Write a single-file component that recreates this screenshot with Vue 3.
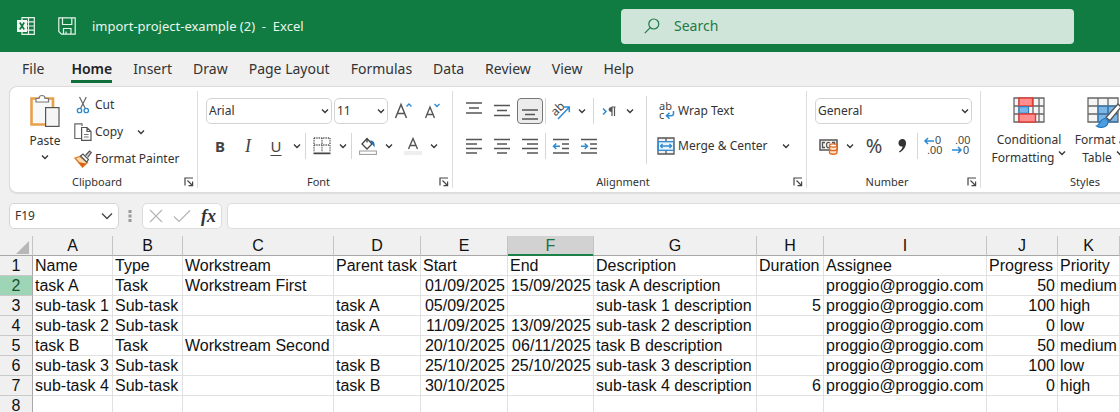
<script setup>
import { ref, h } from 'vue'

const Chevron = () =>
  h('svg', { class: 'chev', viewBox: '0 0 8 8', width: 8, height: 8, 'aria-hidden': 'true' }, [
    h('path', { d: 'M1 2.5 4 5.5 7 2.5', fill: 'none', stroke: '#333', 'stroke-width': 1.3 }),
  ])

const Launcher = () =>
  h('svg', { viewBox: '0 0 10 10', width: 10, height: 10, 'aria-hidden': 'true' }, [
    h('path', {
      d: 'M1 8.5V1H9M3.5 3.5 8 8M8.6 4.5V8.6H4.5',
      fill: 'none',
      stroke: '#444',
      'stroke-width': 1.2,
    }),
  ])

const lineIcons = {
  'Top align': ['M1 2H17', 'M4 7H14', 'M1 12H17'],
  'Middle align': ['M1 4.500H17', 'M4 9.500H14', 'M1 14.500H17'],
  'Bottom align': ['M1 9H17', 'M4 13.500H14', 'M1 18H17'],
  'Align left': ['M1 2.500H17', 'M1 7H12', 'M1 11.500H17', 'M1 16H12'],
  Center: ['M1 2.500H17', 'M4 7H14', 'M1 11.500H17', 'M4 16H14'],
  'Align right': ['M1 2.500H17', 'M6 7H17', 'M1 11.500H17', 'M6 16H17'],
}
const vertical = ['Top align', 'Middle align', 'Bottom align']
const horizontal = ['Align left', 'Center', 'Align right']

const tabs = ['File', 'Home', 'Insert', 'Draw', 'Page Layout', 'Formulas', 'Data', 'Review', 'View', 'Help']
const activeTab = ref('Home')
const formula = ref('')

const columns = ['A', 'B', 'C', 'D', 'E', 'F', 'G', 'H', 'I', 'J', 'K']
const numeric = { 4: true, 5: true, 7: true, 9: true }
const mail = 'proggio@proggio.com'
const rows = [
  ['Name', 'Type', 'Workstream', 'Parent task', 'Start', 'End', 'Description', 'Duration', 'Assignee', 'Progress', 'Priority'],
  ['task A', 'Task', 'Workstream First', '', '01/09/2025', '15/09/2025', 'task A description', '', mail, '50', 'medium'],
  ['sub-task 1', 'Sub-task', '', 'task A', '05/09/2025', '', 'sub-task 1 description', '5', mail, '100', 'high'],
  ['sub-task 2', 'Sub-task', '', 'task A', '11/09/2025', '13/09/2025', 'sub-task 2 description', '', mail, '0', 'low'],
  ['task B', 'Task', 'Workstream Second', '', '20/10/2025', '06/11/2025', 'task B description', '', mail, '50', 'medium'],
  ['sub-task 3', 'Sub-task', '', 'task B', '25/10/2025', '25/10/2025', 'sub-task 3 description', '', mail, '100', 'low'],
  ['sub-task 4', 'Sub-task', '', 'task B', '30/10/2025', '', 'sub-task 4 description', '6', mail, '0', 'high'],
  ['', '', '', '', '', '', '', '', '', '', ''],
]
</script>

<template>
  <div class="app">
    <header class="titlebar">
      <svg class="logo" viewBox="0 0 18 18" width="18" height="18" aria-hidden="true">
        <path d="M5 .7H17.300V17.300H5zM5 4.800H17.300M5 9H17.300M5 13.200H17.300M11.500 .7V17.300" fill="none" stroke="#e6f3eb" stroke-width="1.200" />
        <rect x="0" y="3" width="10" height="12" fill="#f2f9f5" />
        <path d="M2.800 5.500 7.200 12.500M7.200 5.500 2.800 12.500" stroke="#107c41" stroke-width="1.700" />
      </svg>
      <button class="save" aria-label="Save">
        <svg viewBox="0 0 18 18" width="18" height="18" aria-hidden="true">
          <path d="M.8 .8H17.200V17.200H3.500L.8 14.500zM4.500 .8V7.500H13.800V.8M5.500 17V11.500H13V17M8 14.500V17" fill="none" stroke="#e6f3eb" stroke-width="1.200" />
        </svg>
      </button>
      <span class="doc">import-project-example (2)&nbsp; -&nbsp; Excel</span>
      <label class="search">
        <svg viewBox="0 0 16 16" width="16" height="16" aria-hidden="true">
          <circle cx="9.800" cy="6" r="5" fill="none" stroke="#1f7a47" stroke-width="1.200" />
          <path d="M6.200 9.700 .8 15.200" stroke="#1f7a47" stroke-width="1.200" />
        </svg>
        <input type="text" placeholder="Search" aria-label="Search" />
      </label>
    </header>

    <nav class="tabs">
      <button v-for="t in tabs" :key="t" :class="{ active: t === activeTab }" @click="activeTab = t">{{ t }}</button>
    </nav>

    <div class="ribbon">
      <section class="group clipboard">
        <div class="body">
          <button class="paste">
            <svg viewBox="0 0 30 34" width="30" height="34" aria-hidden="true">
              <path d="M1.500 4.500H23V30.500H1.500z" fill="#f7f8f8" stroke="#e8a04a" stroke-width="2.600" />
              <path d="M6 8V4.500H9C9 .5 15 .5 15 4.500H18.500V8z" fill="#fff" stroke="#777" stroke-width="1.200" />
              <rect x="15" y="13" width="14.500" height="19.500" fill="#fff" />
              <rect x="15.600" y="13.600" width="13.400" height="18.800" fill="#f5f5f5" stroke="#555" stroke-width="1.200" />
            </svg>
            <span>Paste</span>
            <Chevron />
          </button>
          <div class="stack">
            <button>
              <svg viewBox="0 0 18 18" width="18" height="18" aria-hidden="true">
                <path d="M5.500 1 11.300 12.500M12.300 1 6.500 12.500" stroke="#666" stroke-width="1.200" />
                <circle cx="5.500" cy="14.500" r="2.200" fill="none" stroke="#2f8ad0" stroke-width="1.300" />
                <circle cx="12.300" cy="14.500" r="2.200" fill="none" stroke="#2f8ad0" stroke-width="1.300" />
              </svg>
              <span>Cut</span>
            </button>
            <button>
              <svg viewBox="0 0 18 18" width="18" height="18" aria-hidden="true">
                <path d="M7 15.500H.8V.8H8V3" fill="none" stroke="#666" stroke-width="1.200" />
                <path d="M7.600 4.500H13L17 8.500V17.300H7.600zM13 4.500V8.500H17" fill="#fff" stroke="#555" stroke-width="1.200" />
                <path d="M10 11.500H14.600M10 14H14.600" stroke="#777" stroke-width="1.200" />
              </svg>
              <span>Copy</span>
              <Chevron />
            </button>
            <button>
              <svg viewBox="0 0 18 18" width="18" height="18" aria-hidden="true">
                <path d="M1 8 6 6.500 13.500 12.500 8.500 17z" fill="#f9dcae" stroke="#e07b22" stroke-width="1.300" />
                <path d="M4 12 8.500 17 12 13.500z" fill="#dd5f14" />
                <path d="M6.500 6 9 4 14.500 9.500 12.500 12z" fill="#fff" stroke="#555" stroke-width="1.200" />
                <path d="M11.500 5.500 15.500 1 17.300 2.600 13.600 7.500" fill="#ccc" stroke="#555" stroke-width="1.200" />
              </svg>
              <span>Format Painter</span>
            </button>
          </div>
        </div>
        <footer><span>Clipboard</span><button aria-label="Clipboard settings"><Launcher /></button></footer>
      </section>

      <section class="group font">
        <div class="body rows">
          <div class="row">
            <label class="pick family">
              <select aria-label="Font"><option>Arial</option></select>
              <Chevron />
            </label>
            <label class="pick size">
              <select aria-label="Font size"><option>11</option></select>
              <Chevron />
            </label>
            <button class="ib grow" aria-label="Increase font size">
              <svg viewBox="0 0 20 20" width="20" height="20" aria-hidden="true">
                <path d="M1.500 17 7 3.500 12.500 17M3.500 12.500H10.500" fill="none" stroke="#555" stroke-width="1.500" />
                <path d="M12.500 5.500 15 3 17.500 5.500" fill="none" stroke="#2f8ad0" stroke-width="1.400" />
              </svg>
            </button>
            <button class="ib" aria-label="Decrease font size">
              <svg viewBox="0 0 20 20" width="20" height="20" aria-hidden="true">
                <path d="M3.500 17 8 6 12.500 17M5 13.500H11" fill="none" stroke="#555" stroke-width="1.400" />
                <path d="M12.500 3 15 5.500 17.500 3" fill="none" stroke="#2f8ad0" stroke-width="1.400" />
              </svg>
            </button>
          </div>
          <div class="row">
            <button class="ib glyph bold">B</button>
            <button class="ib glyph italic">I</button>
            <button class="ib glyph under">U</button>
            <button class="dd" aria-label="Underline options"><Chevron /></button>
            <i class="rule"></i>
            <button class="ib" aria-label="Borders">
              <svg viewBox="0 0 18 18" width="18" height="18" aria-hidden="true">
                <path d="M1 1H17M1 1V15M17 1V15M9 1V15M1 8H17" fill="none" stroke="#555" stroke-width="1.300" stroke-dasharray="1.300 1" />
                <path d="M.5 16.300H17.500" stroke="#444" stroke-width="1.800" />
              </svg>
            </button>
            <button class="dd" aria-label="Border options"><Chevron /></button>
            <i class="rule"></i>
            <button class="ib" aria-label="Fill color">
              <svg viewBox="0 0 18 18" width="18" height="18" aria-hidden="true">
                <path d="M8 1.500 13 7 8 12 3 7zM8 1.500V5.500" fill="#fff" stroke="#444" stroke-width="1.300" />
                <path d="M11 3.500C15 3.500 16 6 15.500 10.500L12.500 6z" fill="#1f6fb5" />
                <rect x=".6" y="14" width="16.800" height="3.400" fill="#fff" stroke="#999" />
              </svg>
            </button>
            <button class="dd roomy" aria-label="Fill color options"><Chevron /></button>
            <button class="ib" aria-label="Font color">
              <svg viewBox="0 0 18 18" width="18" height="18" aria-hidden="true">
                <path d="M4.500 12 9 1.500 13.500 12M6 8.500H12" fill="none" stroke="#555" stroke-width="1.400" />
                <rect x="0" y="14" width="18" height="4" fill="#eee" />
              </svg>
            </button>
            <button class="dd" aria-label="Font color options"><Chevron /></button>
          </div>
        </div>
        <footer><span>Font</span><button aria-label="Font settings"><Launcher /></button></footer>
      </section>

      <section class="group align">
        <div class="body">
          <div class="rows">
            <div class="row">
              <button v-for="n in vertical" :key="n" class="ib" :class="{ on: n === 'Bottom align' }" :aria-label="n">
                <svg viewBox="0 0 18 20" width="18" height="20" aria-hidden="true">
                  <path v-for="d in lineIcons[n]" :key="d" :d="d" stroke="#555" stroke-width="1.400" />
                </svg>
              </button>
              <i class="rule"></i>
              <button class="ib" aria-label="Orientation">
                <svg viewBox="0 0 20 20" width="20" height="20" aria-hidden="true">
                  <text x="1" y="13" transform="rotate(-45 6 10)" font-size="12" fill="#444">ab</text>
                  <path d="M7 18 18 6.500M13 6H18.300V11.300" fill="none" stroke="#2f8ad0" stroke-width="1.500" />
                </svg>
              </button>
              <button class="dd roomy" aria-label="Orientation options"><Chevron /></button>
              <i class="rule"></i>
              <button class="ib" aria-label="Text direction">
                <svg viewBox="0 0 16 16" width="16" height="16" aria-hidden="true">
                  <path d="M2 5.500 5 8.500 2 11.500" fill="none" stroke="#2f8ad0" stroke-width="1.500" />
                  <path d="M10.500 4H14.500M11 4V13M13.500 4V13" stroke="#555" stroke-width="1.200" />
                  <path d="M11 4C6.500 4 6.500 9 11 9z" fill="#555" />
                </svg>
              </button>
              <button class="dd" aria-label="Text direction options"><Chevron /></button>
            </div>
            <div class="row">
              <button v-for="n in horizontal" :key="n" class="ib" :aria-label="n">
                <svg viewBox="0 0 18 18" width="18" height="18" aria-hidden="true">
                  <path v-for="d in lineIcons[n]" :key="d" :d="d" stroke="#555" stroke-width="1.400" />
                </svg>
              </button>
              <i class="rule"></i>
              <button class="ib" aria-label="Decrease indent">
                <svg viewBox="0 0 18 18" width="18" height="18" aria-hidden="true">
                  <path d="M1 2.500H17M10 7H17M10 11.500H17M1 16H17" stroke="#555" stroke-width="1.400" />
                  <path d="M8 9.200H1.800M4.300 6.500 1.500 9.200 4.300 12" fill="none" stroke="#2f8ad0" stroke-width="1.500" />
                </svg>
              </button>
              <button class="ib" aria-label="Increase indent">
                <svg viewBox="0 0 18 18" width="18" height="18" aria-hidden="true">
                  <path d="M1 2.500H17M10 7H17M10 11.500H17M1 16H17" stroke="#555" stroke-width="1.400" />
                  <path d="M1 9.200H7.200M4.700 6.500 7.500 9.200 4.700 12" fill="none" stroke="#2f8ad0" stroke-width="1.500" />
                </svg>
              </button>
            </div>
          </div>
          <i class="rule tall"></i>
          <div class="rows wraps">
            <div class="row">
              <button class="labelled">
                <svg viewBox="0 0 18 20" width="18" height="20" aria-hidden="true">
                  <text x="2" y="9" font-size="11" fill="#444">ab</text>
                  <text x="2" y="18" font-size="11" fill="#444">c</text>
                  <path d="M16.500 10V12.500Q16.500 14.800 14 14.800H10M12.500 11.800 9.500 14.800 12.500 17.800" fill="none" stroke="#2f8ad0" stroke-width="1.500" />
                </svg>
                <span>Wrap Text</span>
              </button>
            </div>
            <div class="row">
              <button class="labelled">
                <svg viewBox="0 0 18 18" width="18" height="18" aria-hidden="true">
                  <path d="M1 1H17V17H1zM9 1V5M9 13V17" fill="#f2f2f2" stroke="#555" stroke-width="1.300" />
                  <rect x="1.300" y="4.700" width="15.400" height="8.600" fill="#eaf4fb" stroke="#2f8ad0" stroke-width="1.300" />
                  <path d="M3.500 9H14.500M5.500 7 3.500 9 5.500 11M12.500 7 14.500 9 12.500 11" fill="none" stroke="#2f8ad0" stroke-width="1.300" />
                </svg>
                <span>Merge &amp; Center</span>
                <Chevron />
              </button>
            </div>
          </div>
        </div>
        <footer><span>Alignment</span><button aria-label="Alignment settings"><Launcher /></button></footer>
      </section>

      <section class="group number">
        <div class="body rows">
          <div class="row">
            <label class="pick format">
              <select aria-label="Number format"><option>General</option></select>
              <Chevron />
            </label>
          </div>
          <div class="row">
            <button class="ib" aria-label="Accounting format">
              <svg viewBox="0 0 20 18" width="20" height="18" aria-hidden="true">
                <path d="M1 3H18V13H1z" fill="#f5f5f5" stroke="#555" stroke-width="1.500" />
                <path d="M6 5.500H3.500V10.500H6M11 6C8.500 4.500 7.500 6 7.500 8S8.500 11 10 10.500M13 5.500H15.500V8" fill="none" stroke="#555" stroke-width="1.300" />
                <path d="M10.500 8.500V15.500C10.500 17.800 18 17.800 18 15.500V8.500" fill="#fbe3cd" stroke="#e0671b" stroke-width="1.300" />
                <ellipse cx="14.250" cy="8.500" rx="3.750" ry="1.600" fill="#fff" stroke="#e0671b" stroke-width="1.300" />
                <path d="M10.500 12C10.500 14.200 18 14.200 18 12" fill="none" stroke="#e0671b" stroke-width="1.300" />
              </svg>
            </button>
            <button class="dd roomy" aria-label="Accounting options"><Chevron /></button>
            <button class="ib glyph percent">%</button>
            <button class="ib" aria-label="Comma style">
              <svg viewBox="0 0 18 18" width="18" height="18" aria-hidden="true">
                <path d="M9 2C14.500 1.500 15 11 6.500 15.500L6 14.500C8.500 12.800 9.500 11 9.500 9.500C4.500 10.500 4 2.500 9 2z" fill="#333" />
              </svg>
            </button>
            <i class="rule"></i>
            <button class="ib" aria-label="Increase decimal">
              <svg viewBox="0 0 20 20" width="20" height="20" aria-hidden="true">
                <text class="digits" x="12" y="8" font-size="11" fill="#444">0</text>
                <text class="digits" x="4" y="18" font-size="11" fill="#444">.00</text>
                <path d="M11 5H2M5 2 2 5 5 8" fill="none" stroke="#2f8ad0" stroke-width="1.500" />
              </svg>
            </button>
            <button class="ib" aria-label="Decrease decimal">
              <svg viewBox="0 0 20 20" width="20" height="20" aria-hidden="true">
                <text class="digits" x="4" y="8" font-size="11" fill="#444">.00</text>
                <text class="digits" x="12" y="18" font-size="11" fill="#444">0</text>
                <path d="M1 14H10M7 11 10 14 7 17" fill="none" stroke="#2f8ad0" stroke-width="1.500" />
              </svg>
            </button>
          </div>
        </div>
        <footer><span>Number</span><button aria-label="Number settings"><Launcher /></button></footer>
      </section>

      <section class="group styles">
        <div class="body">
          <button class="big">
            <svg viewBox="0 0 32 26" width="32" height="26" aria-hidden="true">
              <path d="M1 1H31V25H1zM1 9H31M1 17H31M6 1V25M20 1V25M26 1V25" fill="#f5f5f5" stroke="#666" stroke-width="1.300" />
              <rect x="6" y="1" width="13.500" height="8" fill="#ff8f8f" stroke="#e23b32" stroke-width="1.400" />
              <rect x="6" y="9.700" width="9.500" height="6.600" fill="#7ab7e8" stroke="#2f7fc4" stroke-width="1.200" />
              <rect x="6" y="17" width="16.500" height="8" fill="#ff8f8f" stroke="#e23b32" stroke-width="1.400" />
            </svg>
            <span>Conditional</span>
            <span>Formatting <Chevron /></span>
          </button>
          <button class="big">
            <svg viewBox="0 0 32 32" width="32" height="32" aria-hidden="true">
              <path d="M1 1H31V25H1z" fill="#f5f5f5" />
              <rect x="11" y="9" width="20" height="16" fill="#7ab7e8" />
              <path d="M1 1H31V25H1zM1 9H31M1 17H31M11 1V25M21 1V25" fill="none" stroke="#666" stroke-width="1.300" />
              <path d="M11 9H31M11 9V25H31M11 17H31M21 9V25" fill="none" stroke="#2f7fc4" stroke-width="1.200" />
              <path d="M19 20.500 31 7 34 10 23 23.500z" fill="#fff" stroke="#555" stroke-width="1.300" />
              <path d="M9.500 29C13.500 28 12 22.500 18 21.500C23 22.500 22 30 14.500 30.500C12.500 30.500 11 30 9.500 29z" fill="#4b9fe0" stroke="#2477bd" stroke-width="1.200" />
            </svg>
            <span>Format as</span>
            <span>Table <Chevron /></span>
          </button>
        </div>
        <footer><span>Styles</span></footer>
      </section>
    </div>

    <div class="formula">
      <label class="pick name">
        <select aria-label="Name box"><option>F19</option></select>
        <svg viewBox="0 0 12 8" width="12" height="8" aria-hidden="true">
          <path d="M1 1.500 6 6.500 11 1.500" fill="none" stroke="#444" stroke-width="1.300" />
        </svg>
      </label>
      <svg class="dots" viewBox="0 0 4 14" width="4" height="14" aria-hidden="true">
        <path d="M.5 1H3.500V4H.5zM.5 5.500H3.500V8.500H.5zM.5 10H3.500V13H.5z" fill="#999" />
      </svg>
      <div class="entry">
        <button aria-label="Cancel">
          <svg viewBox="0 0 14 14" width="14" height="14" aria-hidden="true">
            <path d="M1 1 13 13M13 1 1 13" stroke="#b5b5b5" stroke-width="1.200" />
          </svg>
        </button>
        <button aria-label="Enter">
          <svg viewBox="0 0 18 14" width="18" height="14" aria-hidden="true">
            <path d="M1 7.500 6 12.500 17 1.500" fill="none" stroke="#b5b5b5" stroke-width="1.200" />
          </svg>
        </button>
        <button class="fx">fx</button>
      </div>
      <input v-model="formula" class="line" type="text" aria-label="Formula bar" />
    </div>

    <main class="sheet">
      <table>
        <colgroup>
          <col class="c-head" />
          <col v-for="c in columns" :key="c" :class="'c-' + c" />
        </colgroup>
        <thead>
          <tr>
            <th class="corner" aria-label="Select all">
              <svg viewBox="0 0 13 13" width="13" height="13" aria-hidden="true"><path d="M13 0V13H0z" fill="#b7b7b7" /></svg>
            </th>
            <th v-for="c in columns" :key="c" scope="col" :class="{ sel: c === 'F' }">{{ c }}</th>
          </tr>
        </thead>
        <tbody>
          <tr v-for="(r, i) in rows" :key="i">
            <th scope="row" :class="{ sel: i === 1 }">{{ i + 1 }}</th>
            <td v-for="(v, j) in r" :key="j" :class="{ num: i > 0 && numeric[j] }">{{ v }}</td>
          </tr>
        </tbody>
      </table>
    </main>
  </div>
</template>

<style>
body {
  background: #fff;
}
</style>

<style scoped>
.app {
  height: 100vh;
  overflow: hidden;
  display: flex;
  flex-direction: column;
  background: #f0f0f0;
  color: #333;
  font-family: 'Noto Sans', 'Open Sans', sans-serif;
  font-size: 12px;
  line-height: 18px;
}
button,
input,
select {
  font: inherit;
  color: inherit;
  background: none;
  border: 0;
  padding: 0;
  margin: 0;
  outline: 0;
}
svg {
  display: block;
  flex: none;
  overflow: visible;
}
svg text {
  font-family: 'Noto Sans', sans-serif;
}
svg .digits {
  font-family: 'Liberation Sans', Arial, sans-serif;
}

.titlebar {
  flex: none;
  display: flex;
  align-items: center;
  height: 52px;
  padding: 0 46px 0 17px;
  background: #107c41;
  color: #e9f5ee;
}
.save {
  margin: 0 16px 0 23px;
}
.doc {
  flex: 1;
  font-size: 13px;
  white-space: nowrap;
}
.search {
  flex: 0 1 453px;
  box-sizing: border-box;
  display: flex;
  align-items: center;
  gap: 14px;
  height: 35px;
  padding: 0 23px;
  border-radius: 4px;
  background: #cfe5d9;
  color: #1f7a47;
  font-size: 14px;
}
.search input {
  flex: 1;
  min-width: 0;
}
.search input::placeholder {
  color: #1f7a47;
  opacity: 1;
}

.tabs {
  flex: none;
  display: flex;
  gap: 21px;
  height: 34px;
  padding-left: 22px;
  font-size: 14px;
  line-height: 20px;
}
.tabs button {
  height: 31px;
  padding: 7px 0 1px;
  box-sizing: border-box;
  border-bottom: 3px solid transparent;
  white-space: nowrap;
}
.tabs button:first-child {
  margin-right: 6px;
}
.tabs .active {
  font-weight: 600;
  color: #222;
  border-color: #0f703b;
}

.ribbon {
  flex: none;
  display: flex;
  margin-left: 9px;
  height: 107px;
  box-sizing: border-box;
  border: 1px solid #dcdcdc;
  border-right: 0;
  border-radius: 8px 0 0 8px;
  background: #fff;
  box-shadow: 0 1px 1px #ddd;
  overflow: hidden;
}
.group {
  flex: none;
  display: flex;
  flex-direction: column;
  margin: 4px 0;
  box-sizing: border-box;
  border-right: 1px solid #dcdcdc;
}
.clipboard {
  width: 188px;
}
.font {
  width: 255px;
}
.align {
  width: 354px;
}
.number {
  width: 174px;
}
.styles {
  width: 212px;
}
.body {
  flex: 1;
  display: flex;
  align-items: flex-start;
}
.group footer {
  display: flex;
  align-items: center;
  height: 12px;
  padding-right: 3px;
  font-size: 11px;
  line-height: 12px;
}
.group footer span {
  flex: 1;
  text-align: center;
}
.group footer button {
  width: 10px;
}
.paste {
  display: flex;
  flex-direction: column;
  align-items: center;
  width: 44px;
  margin: 3px 7px 0 13px;
}
.paste span {
  padding: 4px 0 3px;
}
.stack {
  display: flex;
  flex-direction: column;
}
.stack button,
.labelled {
  display: flex;
  align-items: center;
  height: 27px;
  gap: 3px;
  white-space: nowrap;
}
.stack .chev,
.labelled .chev {
  margin-left: 11px;
}
.body.rows {
  flex-direction: column;
}
.rows {
  display: flex;
  flex-direction: column;
  padding: 7px 0 0 8px;
  gap: 9px;
}
.row {
  display: flex;
  align-items: center;
  height: 26px;
}
.ib {
  display: grid;
  place-items: center;
  width: 28px;
  height: 26px;
}
.ib.on {
  box-sizing: border-box;
  width: 26px;
  margin: 0 1px;
  border: 1px solid #777;
  border-radius: 4px;
  background: #ececec;
}
.ib.grow {
  margin-left: 2px;
}
.dd {
  display: grid;
  place-items: center;
  width: 13px;
  height: 26px;
}
.dd.roomy {
  margin-right: 4px;
}
.rule {
  width: 1px;
  height: 26px;
  margin: 0 1px;
  background: #d6d6d6;
}
.rule.tall {
  height: 68px;
  margin: 5px 2px 0 0;
}
.font .rule {
  margin: 0 2px;
}
.align .rows:first-child {
  width: 186px;
  padding-left: 7px;
}
.glyph {
  font-size: 15px;
  color: #444;
}
.bold {
  font-weight: 700;
}
.italic {
  font-family: 'Liberation Serif', serif;
  font-style: italic;
  font-size: 18px;
}
.under {
  text-decoration: underline;
  text-underline-offset: 3px;
}
.percent {
  font-size: 20px;
}
.pick {
  display: grid;
  align-items: center;
  box-sizing: border-box;
  height: 26px;
  border: 1px solid #d4d4d4;
  border-radius: 5px;
  background: #fff;
}
.pick > * {
  grid-area: 1 / 1;
}
.pick select {
  appearance: none;
  width: 100%;
  height: 24px;
  padding-left: 2px;
}
.pick > svg {
  justify-self: end;
  margin-right: 2px;
  pointer-events: none;
}
.family {
  width: 126px;
}
.size {
  width: 54px;
  margin-left: 2px;
}
.format {
  width: 157px;
}
.styles .body {
  padding: 6px 0 0 11px;
}
.big {
  display: flex;
  flex-direction: column;
  align-items: center;
  width: 74px;
  height: 70px;
  white-space: nowrap;
}
.big svg:first-child {
  margin-bottom: auto;
}
.big span {
  display: flex;
  align-items: center;
  gap: 4px;
}
.big .chev {
  margin: 0;
}

.formula {
  flex: none;
  display: flex;
  align-items: center;
  padding: 10px 0 7px 9px;
}
.name {
  width: 110px;
}
.name select {
  padding-left: 5px;
}
.name > svg {
  margin-right: 5px;
}
.dots {
  margin: 0 10px 0 9px;
}
.entry {
  display: flex;
  align-items: center;
  gap: 10px;
  width: 80px;
  height: 26px;
  box-sizing: border-box;
  padding-left: 6px;
  border: 1px solid #dcdcdc;
  border-radius: 5px;
  background: #fff;
}
.fx {
  font: italic 700 18px/20px 'Liberation Serif', serif;
}
.line {
  flex: 1;
  min-width: 0;
  height: 26px;
  box-sizing: border-box;
  margin-left: 5px;
  padding: 0 8px;
  border: 1px solid #dcdcdc;
  border-right: 0;
  border-radius: 5px 0 0 5px;
  background: #fff;
}

.sheet {
  flex: 1;
  min-height: 0;
  overflow: hidden;
  color: #111;
  font: 16px/18px 'Liberation Sans', Arial, sans-serif;
}
table {
  width: 1120px;
  table-layout: fixed;
  border-collapse: separate;
  border-spacing: 0;
}
th,
td {
  box-sizing: border-box;
  height: 20px;
  padding: 1px 2px 0;
  border-right: 1px solid #e1e1e1;
  border-bottom: 1px solid #e1e1e1;
  white-space: nowrap;
  text-align: left;
  font-weight: 400;
}
td {
  background: #fff;
}
th {
  padding: 1px 0 0;
  text-align: center;
  background: #f0f0f0;
}
thead th {
  border-right-color: #c4c4c4;
  border-bottom-color: #a8a8a8;
}
thead .sel {
  background: #d2d2d2;
  color: #1b7245;
  border-bottom-color: #1b7f48;
  box-shadow: inset 0 -1px #1b7f48;
}
tbody th {
  border-right-color: #a8a8a8;
  border-bottom-color: #c8c8c8;
}
tbody .sel {
  background: #9fd5b7;
  color: #14512f;
}
.corner svg {
  margin: 3px 0 0 16px;
}
.num {
  text-align: right;
}
.c-head {
  width: 33px;
}
.c-A {
  width: 80px;
}
.c-B {
  width: 70px;
}
.c-C {
  width: 151px;
}
.c-D {
  width: 87px;
}
.c-E {
  width: 87px;
}
.c-F {
  width: 86px;
}
.c-G {
  width: 163px;
}
.c-H {
  width: 67px;
}
.c-I {
  width: 163px;
}
.c-J {
  width: 71px;
}
.c-K {
  width: 62px;
}
</style>
